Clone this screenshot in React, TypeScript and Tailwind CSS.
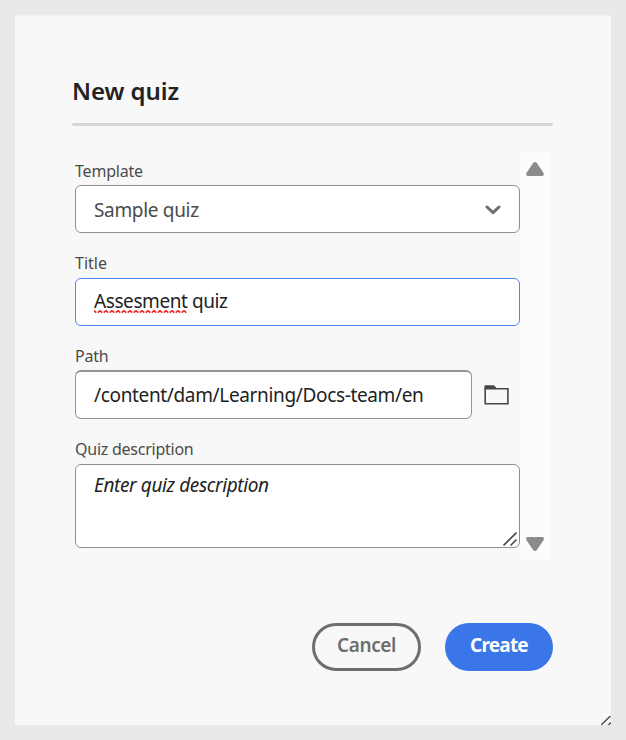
import type { ReactNode } from "react";

function Label({ children, className }: { children: ReactNode; className: string }) {
  return (
    <div className="flex h-6 items-start">
      <span className={`text-[16px] whitespace-nowrap text-[#4b4b4b] ${className}`}>{children}</span>
    </div>
  );
}

function Grip({ className }: { className: string }) {
  return (
    <svg className={className} viewBox="0 0 14 14" fill="none" stroke="#505050" strokeWidth="1.6">
      <path d="M0.5 13.5 13.5 0.5M7.5 13.5l6-6" />
    </svg>
  );
}

export default function App() {
  return (
    <div className="h-[740px] w-[626px] bg-[#e9e9e9] pt-[15px] pl-[15px] font-['Noto_Sans','Open_Sans',sans-serif]">
      <div className="relative h-[710px] w-[596px] overflow-hidden border-t border-[#f0f0f0] bg-[#f8f8f8] pl-[57px]">
        <div className="flex h-[107px] items-end pb-[14px]">
          <h1 className="text-[24px] leading-[36px] font-semibold tracking-[-0.05px] whitespace-nowrap text-[#222]">New quiz</h1>
        </div>
        <div className="h-[3px] w-[481px] rounded-full bg-[#d5d5d5]" />

        <div className="mt-[27px] flex h-[407px] w-[478px] pl-[3px]">
          <div className="flex w-[445px] flex-col gap-[21px] pt-2">
            <div>
              <Label className="leading-[21px] tracking-[-0.2px]">Template</Label>
              <div className="flex h-12 items-center justify-between rounded-md border border-[#909090] bg-white pr-[18px] pl-[18px]">
                <span className="pt-[2px] text-[19px] tracking-[-0.33px] whitespace-nowrap text-[#4b4b4b]">Sample quiz</span>
                <svg className="mt-px h-[10px] w-4" viewBox="0 0 16 10" fill="none" stroke="#6e6e6e" strokeWidth="3" strokeLinecap="round" strokeLinejoin="round">
                  <path d="m2 2 6 5.7L14 2" />
                </svg>
              </div>
            </div>
            <div>
              <Label className="leading-[19px] tracking-[0px]">Title</Label>
              <div className="flex h-12 items-center rounded-md border border-[#4b88f0] bg-white pb-[2px] pl-[18px]">
                <span className="relative text-[19px] tracking-[-0.42px] whitespace-nowrap text-[#222]">
                  Assesment quiz
                  <svg className="absolute top-[23px] left-0 h-1 w-[94px]" viewBox="0 0 94 4" fill="none" stroke="#ee2020" strokeWidth="1.6" strokeDasharray="6 1.81" strokeDashoffset="3">
                    <path d="M0 .7 3 3.2 6 .7 9 3.2 12 .7 15 3.2 18 .7 21 3.2 24 .7 27 3.2 30 .7 33 3.2 36 .7 39 3.2 42 .7 45 3.2 48 .7 51 3.2 54 .7 57 3.2 60 .7 63 3.2 66 .7 69 3.2 72 .7 75 3.2 78 .7 81 3.2 84 .7 87 3.2 90 .7 93 3.2" />
                  </svg>
                </span>
              </div>
            </div>
            <div>
              <Label className="leading-[19px] tracking-[-0.2px]">Path</Label>
              <div className="-mt-px flex items-center gap-3">
                <div className="flex h-[49px] w-[397px] items-center rounded-md border border-t-2 border-[#949494] bg-white pt-px pl-[18px]">
                  <span className="text-[19px] tracking-[-0.35px] whitespace-nowrap text-[#222]">/content/dam/Learning/Docs-team/en</span>
                </div>
                <svg className="h-5 w-[25px]" viewBox="0 0 25 20" fill="none">
                  <path d="M.5 4V1.2Q.5.2 1.5.2H9Q10 .2 10.7.9L13.5 4Z" fill="#464646" />
                  <path d="M1.2 3.7h22.7v15.1H1.2Z" stroke="#464646" strokeWidth="1.6" />
                </svg>
              </div>
            </div>
            <div>
              <Label className="leading-[19px] tracking-[-0.25px]">Quiz description</Label>
              <div className="relative h-[84px] rounded-md border border-[#909090] bg-white pt-[7px] pl-[18px]">
                <span className="block text-[19px] leading-[27px] tracking-[-0.38px] whitespace-nowrap text-[#222] italic">Enter quiz description</span>
                <Grip className="absolute right-[2px] bottom-[1px] size-[14px]" />
              </div>
            </div>
          </div>
          <div className="flex w-[30px] flex-col items-center justify-between bg-[#fcfcfc] pt-[9px] pb-[9px]">
            <svg className="h-[14px] w-[18px]" viewBox="0 0 18 14" fill="#8b8b8b">
              <path d="M7 1.2Q9-1.2 11 1.2L17.3 10.5Q18.9 14 16 14H2Q-.9 14 .7 10.5Z" />
            </svg>
            <svg className="h-[14px] w-[18px]" viewBox="0 0 18 14" fill="#8b8b8b">
              <path d="M7 12.8Q9 15.2 11 12.8L17.3 3.5Q18.9 0 16 0H2Q-.9 0 .7 3.5Z" />
            </svg>
          </div>
        </div>

        <div className="mt-[63px] flex w-[481px] justify-end gap-6">
          <button className="h-12 w-[109px] rounded-full border-[3px] border-[#6e6e6e] pb-[3px] text-[19px] font-semibold tracking-[-0.4px] text-[#6e6e6e]">Cancel</button>
          <button className="h-12 w-[108px] rounded-full bg-[#3a76e8] pb-[3px] text-[19px] font-bold tracking-[-0.8px] text-white">Create</button>
        </div>
        <svg className="absolute right-0 bottom-0 h-[9px] w-[10px]" viewBox="0 0 10 9" fill="none" stroke="#505050" strokeWidth="1.5">
          <path d="M0 9 9.5 0M7 9.5l3-3" />
        </svg>
      </div>
    </div>
  );
}
